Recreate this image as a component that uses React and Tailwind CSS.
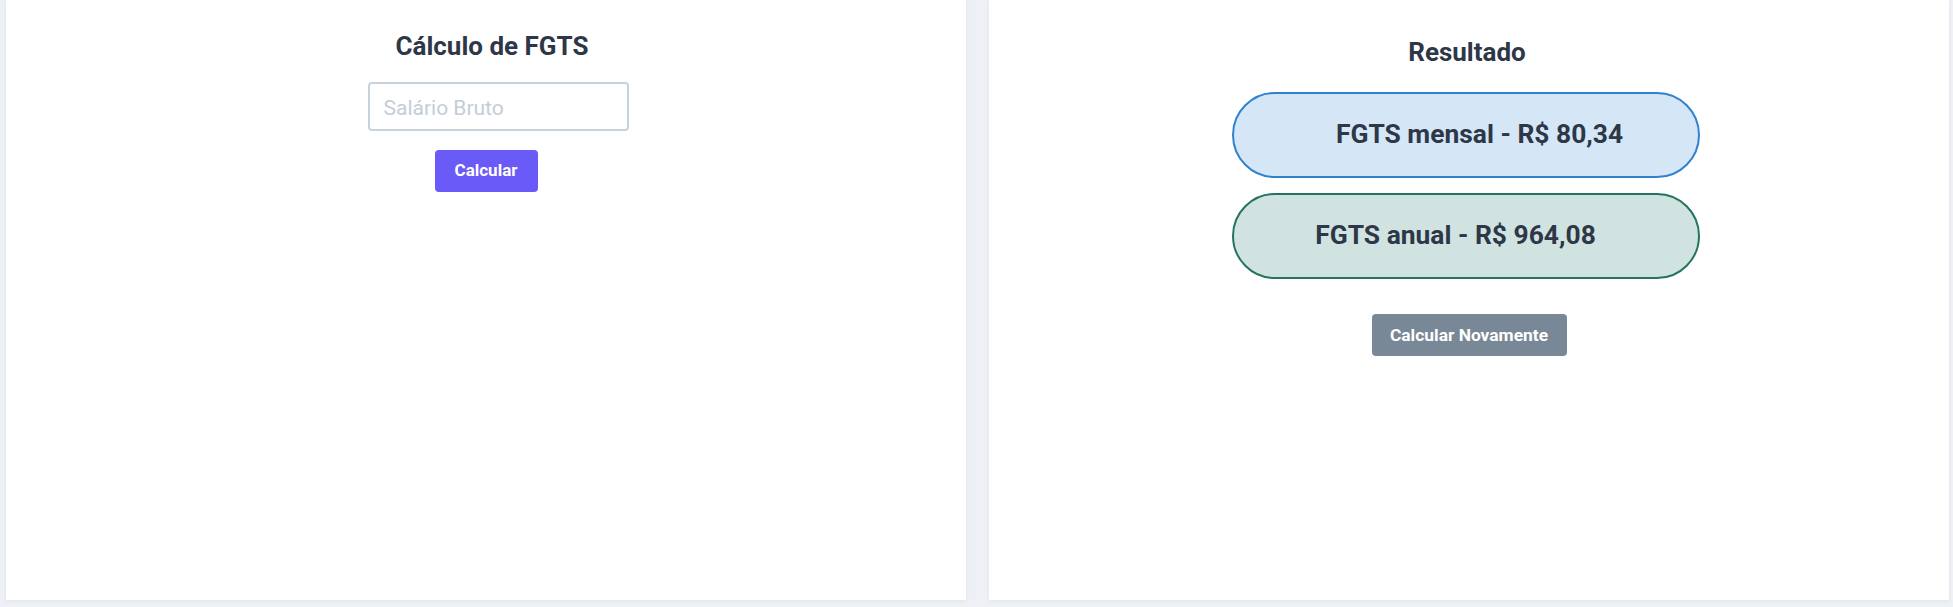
import React from "react";

const font = { fontFamily: "Roboto, 'Liberation Sans', sans-serif" };

export default function App() {
  return (
    <div
      className="flex gap-[23px] pl-[6px] pr-[4px] pb-[7px] bg-[#edf1f5] min-h-[607px] w-[1953px]"
      style={font}
    >
      <div className="w-[960px] h-[600px] bg-white shadow-[0_1px_4px_rgba(0,0,0,0.06)] flex flex-col items-center">
        <h1 className="mt-[32px] ml-[12px] text-[26px] leading-[28px] font-bold text-[#2d3748]">
          Cálculo de FGTS
        </h1>
        <input
          type="text"
          placeholder="Salário Bruto"
          className="mt-[22px] ml-[24px] w-[261px] h-[49px] rounded-[4px] border-2 border-[#c8d2dc] px-[14px] pt-[3px] text-[21px] text-[#2d3748] placeholder:text-[#c2cdd9] outline-none"
        />
        <button className="mt-[19px] w-[103px] h-[42px] rounded-[4px] bg-[#6a5af7] text-white text-[17px] font-bold">
          Calcular
        </button>
      </div>
      <div className="w-[960px] h-[600px] bg-white shadow-[0_1px_4px_rgba(0,0,0,0.06)] flex flex-col items-center">
        <h2 className="mt-[38px] mr-[4px] text-[26px] leading-[28px] font-bold text-[#2d3748]">
          Resultado
        </h2>
        <div className="mt-[26px] mr-[7px] w-[468px] flex flex-col gap-[15px]">
          <div className="h-[86px] rounded-full border-2 border-[#3182ce] bg-[#d5e6f6] flex items-center justify-center pl-[28px]">
            <span className="text-[26.4px] font-bold text-[#2d3748]">FGTS mensal - R$ 80,34</span>
          </div>
          <div className="h-[86px] rounded-full border-2 border-[#23735f] bg-[#d1e3e0] flex items-center justify-center pr-[20px]">
            <span className="text-[26.4px] font-bold text-[#2d3748]">FGTS anual - R$ 964,08</span>
          </div>
        </div>
        <button className="mt-[35px] w-[195px] h-[42px] rounded-[4px] bg-[#798896] text-white text-[17.4px] font-bold">
          Calcular Novamente
        </button>
      </div>
    </div>
  );
}
